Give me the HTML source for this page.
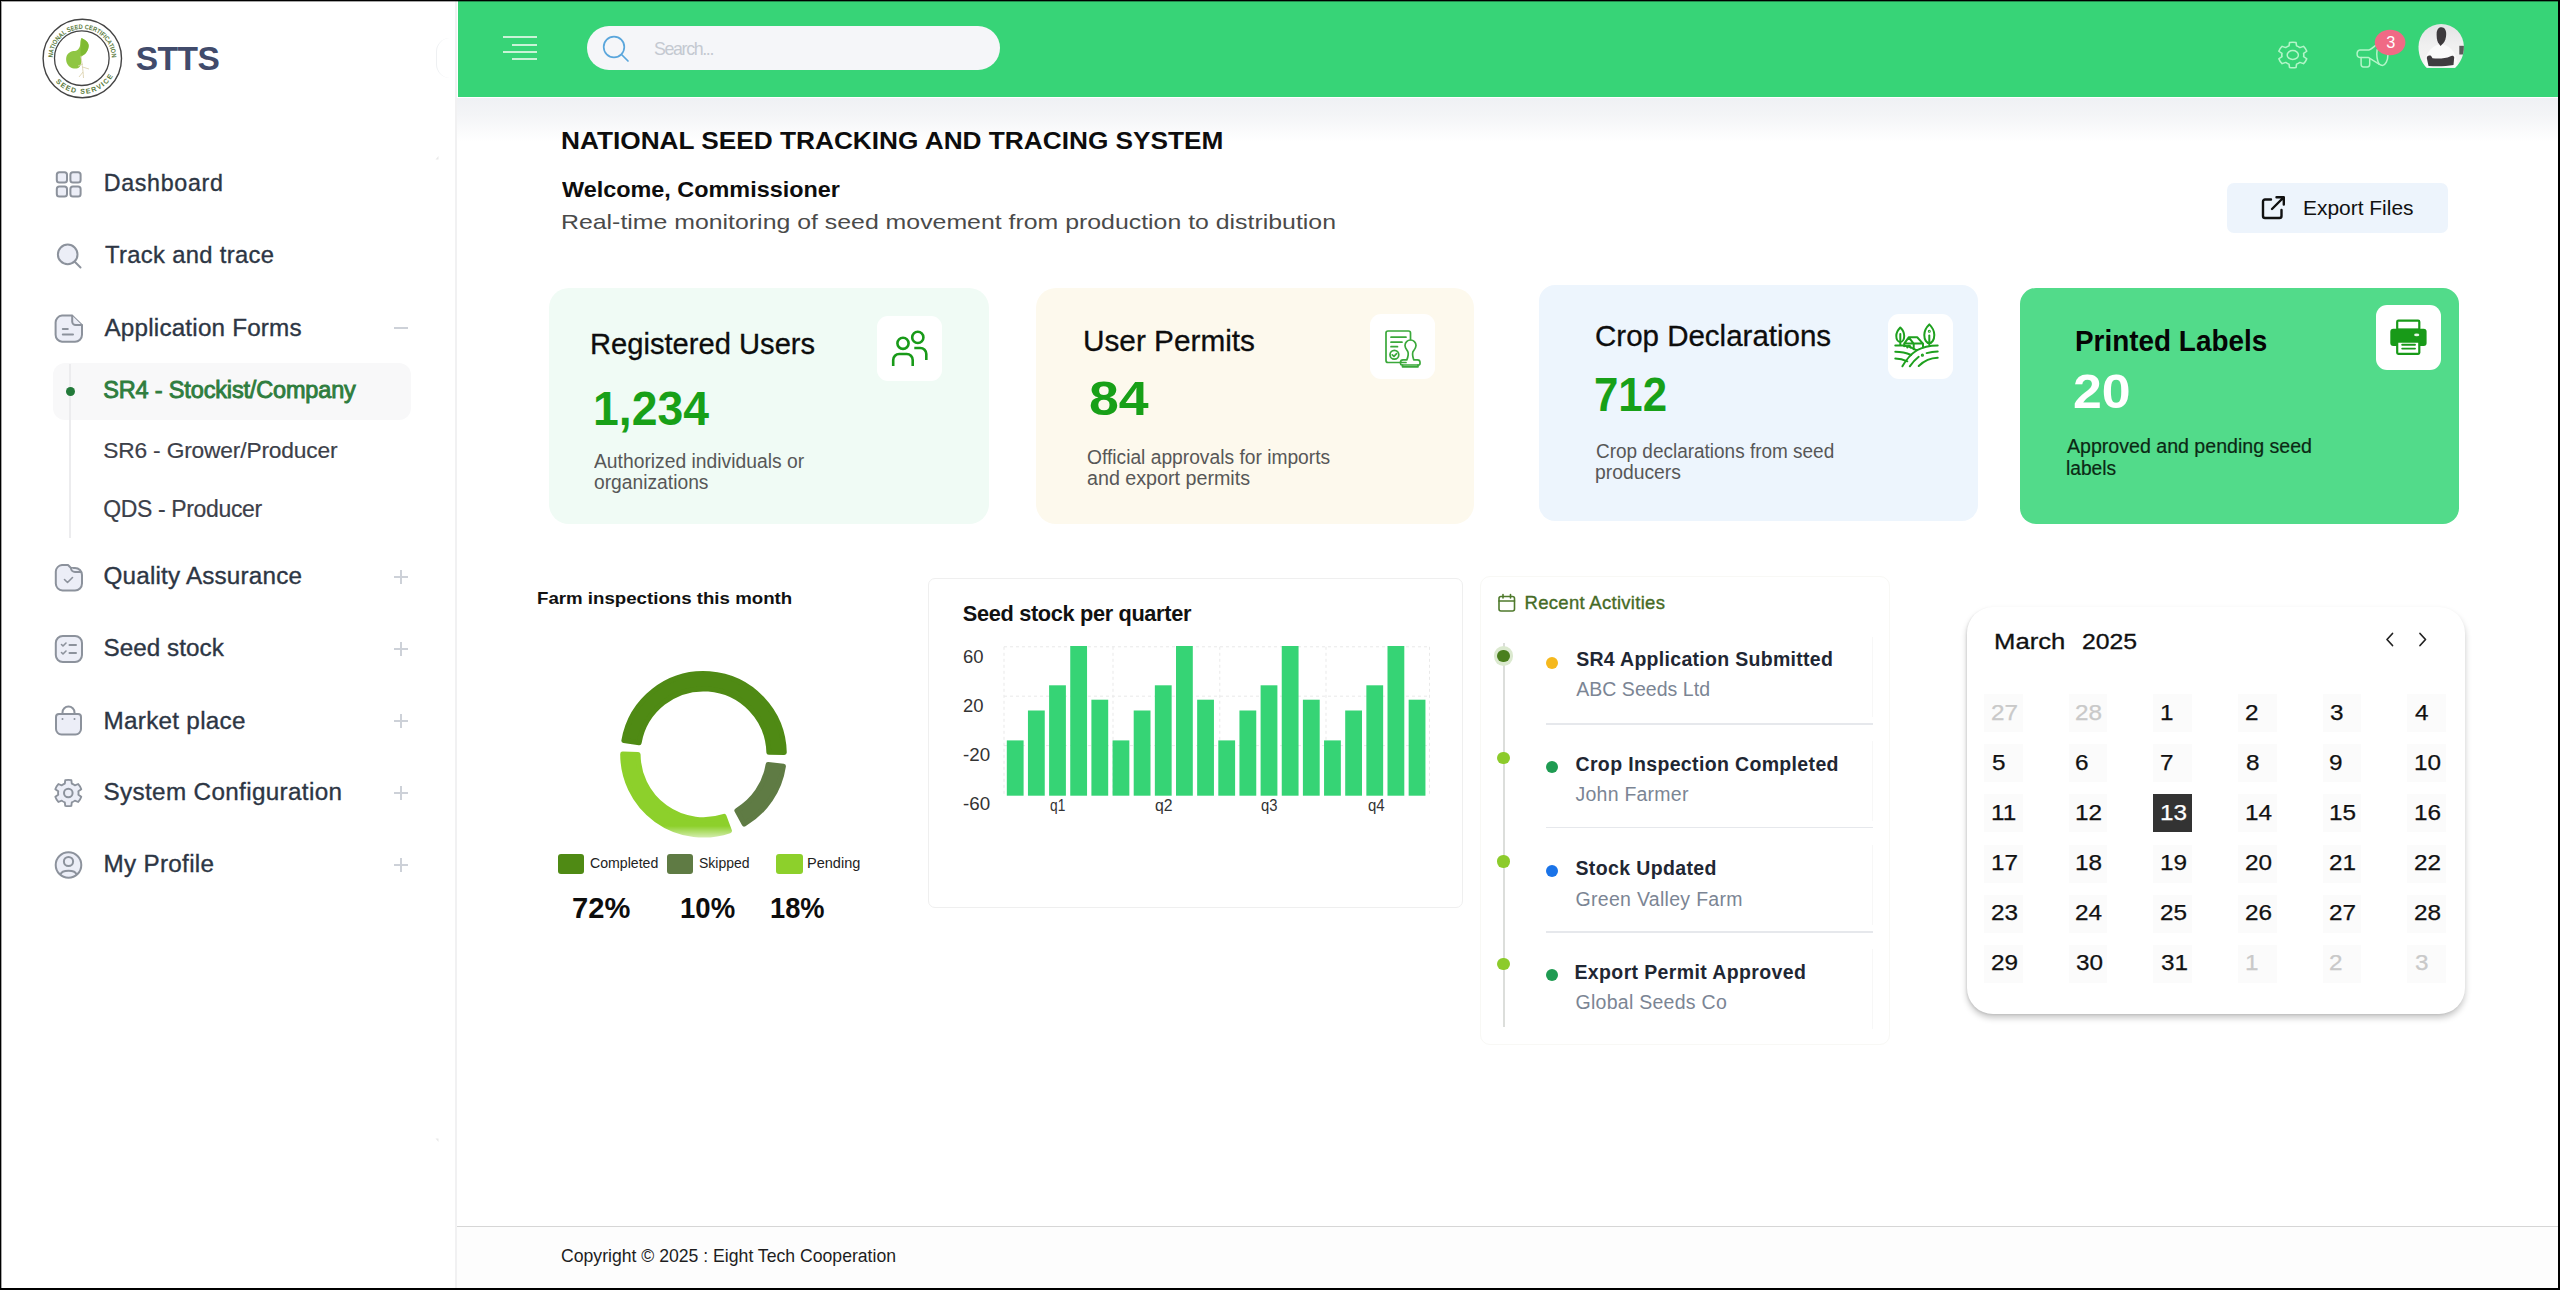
<!DOCTYPE html>
<html><head><meta charset="utf-8"><title>STTS Dashboard</title>
<style>
html,body{margin:0;padding:0;}
body{width:2560px;height:1290px;position:relative;overflow:hidden;background:#ffffff;font-family:"Liberation Sans",sans-serif;}
.t{position:absolute;white-space:nowrap;}
</style></head><body>
<div style="position:absolute;left:0;top:0;width:457px;height:1290px;background:#ffffff;"></div>
<div style="position:absolute;left:455px;top:0;width:2px;height:1290px;background:#f1f1f2;"></div>
<div style="position:absolute;left:458px;top:0;width:2102px;height:97px;background:#37d477;"></div>
<div style="position:absolute;left:457px;top:98px;width:2103px;height:44px;background:linear-gradient(#eff1f4,#f4f5f7 40%,#ffffff);"></div>
<div style="position:absolute;left:457px;top:1226px;width:2103px;height:64px;background:#fdfdfd;border-top:1px solid #d6d6d6;"></div>
<svg style="position:absolute;left:40px;top:16px" width="86" height="86" viewBox="0 0 86 86">
      <defs><path id="ringTop" d="M12.72 41.47 A29.6 29.6 0 0 1 71.88 41.47"/><path id="ringBot" d="M15.66 65.66 A35.3 35.3 0 0 0 72.87 60.15"/></defs>
      <circle cx="42.3" cy="42.5" r="39.2" fill="#ffffff" stroke="#444" stroke-width="1.4"/>
      <circle cx="41.8" cy="42.2" r="27.3" fill="#ffffff" stroke="#444" stroke-width="1.3"/>
      <text font-family="Liberation Sans" font-weight="700" font-size="6.6" fill="#5a7a3c"><textPath href="#ringTop" textLength="90.9" lengthAdjust="spacingAndGlyphs">NATIONAL SEED CERTIFICATION</textPath></text>
      <text font-family="Liberation Sans" font-weight="700" font-size="7" fill="#5a7a3c"><textPath href="#ringBot" textLength="67" lengthAdjust="spacing">SEED  SERVICE</textPath></text>
      <path d="M41.5 22 C45 23.5 49 26.5 48.7 30 C48.5 33 47 35.5 45.5 37.5 C43.5 39.5 41.5 40 40.8 41.5 C41.5 44 42 48 39.5 51 C37.5 53 33 53 30 51 C26.5 48.5 25.5 44 26.5 40.5 C27.5 37 31 35 35 35 C37.5 34.5 39 33 40 30 C40.5 27 40 24.5 41.5 22 Z" fill="#8fc643"/>
      <path d="M41.5 22 C45 23.5 49 26.5 48.7 30 C48.5 33 47 35.5 45.5 37.5 C44 39 42 39.5 41 39 C40 35 41 31 41.2 27 Z" fill="#7cb830" opacity="0.8"/>
      <path d="M41 40 C41.5 46 43 52 43.5 62 M42.5 51 L49 53 M43 56 L39 61 M43 48 L38 50" stroke="#ddd3b0" stroke-width="0.9" fill="none"/>
    </svg>
<svg style="position:absolute;left:50px;top:166px" width="36" height="36" viewBox="0 0 36 36">
      <rect x="6.8" y="6.2" width="10.2" height="10.2" rx="2.5" stroke="#8c929c" stroke-width="2" fill="#eceef7" stroke-linejoin="round" stroke-linecap="round"/>
      <rect x="20.4" y="6.2" width="10.2" height="10.2" rx="2.5" stroke="#8c929c" stroke-width="2" fill="#eceef7" stroke-linejoin="round" stroke-linecap="round"/>
      <rect x="6.8" y="20.4" width="10.2" height="10.2" rx="2.5" stroke="#8c929c" stroke-width="2" fill="#eceef7" stroke-linejoin="round" stroke-linecap="round"/>
      <rect x="20.4" y="20.4" width="10.2" height="10.2" rx="2.5" stroke="#8c929c" stroke-width="2" fill="#eceef7" stroke-linejoin="round" stroke-linecap="round"/></svg>
<svg style="position:absolute;left:50px;top:237px" width="36" height="36" viewBox="0 0 36 36">
      <circle cx="17.7" cy="17.4" r="9.8" stroke="#8c929c" stroke-width="2" fill="#eceef7" stroke-linejoin="round" stroke-linecap="round"/><path d="M25 25 L30.5 30.5" stroke="#8c929c" stroke-width="2" fill="#eceef7" stroke-linejoin="round" stroke-linecap="round"/></svg>
<svg style="position:absolute;left:50px;top:310px" width="36" height="36" viewBox="0 0 36 36">
      <path d="M12 5.6 H22.2 L32 15.2 V24.8 A7 7 0 0 1 25 31.8 H12 A7 7 0 0 1 5.6 24.8 V12.6 A7 7 0 0 1 12 5.6 Z" stroke="#8c929c" stroke-width="2" fill="#eceef7" stroke-linejoin="round" stroke-linecap="round"/>
      <path d="M22.2 5.8 V11.5 A3.5 3.5 0 0 0 25.7 15 H31.8" stroke="#8c929c" stroke-width="2" fill="#eceef7" stroke-linejoin="round" stroke-linecap="round"/>
      <path d="M12.8 18.9 H17.8 M12.8 24.5 H23" stroke="#8c929c" stroke-width="2" fill="#eceef7" stroke-linejoin="round" stroke-linecap="round"/></svg>
<svg style="position:absolute;left:50px;top:559px" width="36" height="36" viewBox="0 0 36 36">
      <path d="M12 6 H18 L21 9 H25 A7 7 0 0 1 32 16 V24.5 A7 7 0 0 1 25 31.5 H12.5 A7 7 0 0 1 5.8 24.5 V12.5 A7 7 0 0 1 12 6 Z" stroke="#8c929c" stroke-width="2" fill="#eceef7" stroke-linejoin="round" stroke-linecap="round"/>
      <path d="M21 9 A4 4 0 0 0 25 13 H31" stroke="#8c929c" stroke-width="2" fill="#eceef7" stroke-linejoin="round" stroke-linecap="round" fill="none"/>
      <path d="M14.5 20.5 L17.5 23.5 L22.5 18.5" stroke="#8c929c" stroke-width="1.6" fill="none" stroke-linecap="round" stroke-linejoin="round"/></svg>
<svg style="position:absolute;left:50px;top:631px" width="36" height="36" viewBox="0 0 36 36">
      <rect x="5.8" y="5" width="26.2" height="26" rx="7" stroke="#8c929c" stroke-width="2" fill="#eceef7" stroke-linejoin="round" stroke-linecap="round"/>
      <path d="M11.5 13.5 L13 15 L16 12 M11.5 21.5 L13 23 L16 20" stroke="#8c929c" stroke-width="1.6" fill="none" stroke-linecap="round" stroke-linejoin="round"/>
      <path d="M19.5 14 H26 M19.5 22 H26" stroke="#8c929c" stroke-width="2" stroke-linecap="round"/></svg>
<svg style="position:absolute;left:50px;top:703px" width="36" height="36" viewBox="0 0 36 36">
      <path d="M12.5 11 V9.5 A6 6 0 0 1 24.5 9.5 V11" stroke="#8c929c" stroke-width="2" fill="none"/>
      <path d="M9 11 H28 A3 3 0 0 1 31 14 L31 26 A5.5 5.5 0 0 1 25.5 31.5 H11.5 A5.5 5.5 0 0 1 6 26 L6 14 A3 3 0 0 1 9 11 Z" stroke="#8c929c" stroke-width="2" fill="#eceef7" stroke-linejoin="round" stroke-linecap="round"/>
      <circle cx="12.5" cy="16" r="1" fill="#8c929c"/><circle cx="24.5" cy="16" r="1" fill="#8c929c"/></svg>
<svg style="position:absolute;left:50px;top:775px" width="36" height="36" viewBox="0 0 36 36">
      <g transform="translate(18.3 18) scale(0.93 0.9)"><path d="M3.76 -10.34 L3.28 -14.23 A14.6 14.6 0 0 0 -3.28 -14.23 L-3.76 -10.34 A11.0 11.0 0 0 0 -7.07 -8.43 L-10.68 -9.96 A14.6 14.6 0 0 0 -13.96 -4.27 L-10.83 -1.91 A11.0 11.0 0 0 0 -10.83 1.91 L-13.96 4.27 A14.6 14.6 0 0 0 -10.68 9.96 L-7.07 8.43 A11.0 11.0 0 0 0 -3.76 10.34 L-3.28 14.23 A14.6 14.6 0 0 0 3.28 14.23 L3.76 10.34 A11.0 11.0 0 0 0 7.07 8.43 L10.68 9.96 A14.6 14.6 0 0 0 13.96 4.27 L10.83 1.91 A11.0 11.0 0 0 0 10.83 -1.91 L13.96 -4.27 A14.6 14.6 0 0 0 10.68 -9.96 L7.07 -8.43 A11.0 11.0 0 0 0 3.76 -10.34 Z" stroke="#8c929c" stroke-width="2" fill="#eceef7" stroke-linejoin="round" stroke-linecap="round"/></g>
      <circle cx="18.3" cy="18" r="4.3" stroke="#8c929c" stroke-width="2" fill="#eceef7" stroke-linejoin="round" stroke-linecap="round" fill="#ffffff"/></svg>
<svg style="position:absolute;left:50px;top:847px" width="36" height="36" viewBox="0 0 36 36">
      <circle cx="18.5" cy="18" r="12.8" stroke="#8c929c" stroke-width="2" fill="#eceef7" stroke-linejoin="round" stroke-linecap="round"/>
      <circle cx="18.5" cy="14.5" r="4.6" stroke="#8c929c" stroke-width="2" fill="#eceef7"/>
      <path d="M10.5 27.5 C12 22.5 25 22.5 26.5 27.5" stroke="#8c929c" stroke-width="2" fill="none"/></svg>
<div style="position:absolute;left:394px;top:327px;width:14px;height:1.6px;background:#cdd1d8;"></div>
<div style="position:absolute;left:394px;top:576.2px;width:14px;height:1.6px;background:#cdd1d8;"></div>
<div style="position:absolute;left:400.2px;top:570px;width:1.6px;height:14px;background:#cdd1d8;"></div>
<div style="position:absolute;left:394px;top:648.2px;width:14px;height:1.6px;background:#cdd1d8;"></div>
<div style="position:absolute;left:400.2px;top:642px;width:1.6px;height:14px;background:#cdd1d8;"></div>
<div style="position:absolute;left:394px;top:720.2px;width:14px;height:1.6px;background:#cdd1d8;"></div>
<div style="position:absolute;left:400.2px;top:714px;width:1.6px;height:14px;background:#cdd1d8;"></div>
<div style="position:absolute;left:394px;top:792.2px;width:14px;height:1.6px;background:#cdd1d8;"></div>
<div style="position:absolute;left:400.2px;top:786px;width:1.6px;height:14px;background:#cdd1d8;"></div>
<div style="position:absolute;left:394px;top:864.2px;width:14px;height:1.6px;background:#cdd1d8;"></div>
<div style="position:absolute;left:400.2px;top:858px;width:1.6px;height:14px;background:#cdd1d8;"></div>
<div style="position:absolute;left:53px;top:363px;width:358px;height:57px;background:#f8f8f9;border-radius:12px;"></div>
<div style="position:absolute;left:69px;top:364px;width:1.5px;height:174px;background:#ececee;"></div>
<div style="position:absolute;left:66px;top:387.3px;width:9px;height:9px;border-radius:50%;background:#237a3a;"></div>
<div style="position:absolute;left:436px;top:38px;width:14px;height:40px;border-left:1.5px solid #eef0f2;border-radius:14px 0 0 14px;"></div>
<svg style="position:absolute;left:432px;top:153px" width="10" height="10" viewBox="0 0 10 10"><path d="M6.5 3 L3.5 6.5 H6.5 Z" fill="#e9e9e9"/></svg>
<svg style="position:absolute;left:432px;top:1135px" width="10" height="10" viewBox="0 0 10 10"><path d="M6.5 7 L3.5 3.5 H6.5 Z" fill="#e9e9e9"/></svg>
<div style="position:absolute;left:503px;top:35.7px;width:34px;height:2px;background:#c9f3d7;"></div>
<div style="position:absolute;left:512px;top:43.5px;width:25px;height:2px;background:#c9f3d7;"></div>
<div style="position:absolute;left:503px;top:50.8px;width:34px;height:2px;background:#c9f3d7;"></div>
<div style="position:absolute;left:512px;top:57.9px;width:25px;height:2px;background:#c9f3d7;"></div>
<div style="position:absolute;left:587px;top:26px;width:413px;height:44px;border-radius:22px;background:#f5f6f9;"></div>
<svg style="position:absolute;left:596px;top:30px" width="40" height="40" viewBox="0 0 40 40">
      <circle cx="18" cy="17" r="10.3" fill="none" stroke="#5aa6dc" stroke-width="1.7"/>
      <path d="M25.5 24.5 L32 31" stroke="#5aa6dc" stroke-width="1.7" stroke-linecap="round"/></svg>
<svg style="position:absolute;left:2272px;top:36px" width="42" height="38" viewBox="0 0 42 38">
      <g transform="translate(20.8 19) scale(1 0.875)"><path d="M3.76 -10.34 L3.28 -14.23 A14.6 14.6 0 0 0 -3.28 -14.23 L-3.76 -10.34 A11.0 11.0 0 0 0 -7.07 -8.43 L-10.68 -9.96 A14.6 14.6 0 0 0 -13.96 -4.27 L-10.83 -1.91 A11.0 11.0 0 0 0 -10.83 1.91 L-13.96 4.27 A14.6 14.6 0 0 0 -10.68 9.96 L-7.07 8.43 A11.0 11.0 0 0 0 -3.76 10.34 L-3.28 14.23 A14.6 14.6 0 0 0 3.28 14.23 L3.76 10.34 A11.0 11.0 0 0 0 7.07 8.43 L10.68 9.96 A14.6 14.6 0 0 0 13.96 4.27 L10.83 1.91 A11.0 11.0 0 0 0 10.83 -1.91 L13.96 -4.27 A14.6 14.6 0 0 0 10.68 -9.96 L7.07 -8.43 A11.0 11.0 0 0 0 3.76 -10.34 Z" fill="none" stroke="#b3f5c8" stroke-width="1.6" stroke-linejoin="round"/></g>
      <ellipse cx="20.8" cy="19" rx="5.6" ry="4.5" fill="none" stroke="#b3f5c8" stroke-width="1.5"/></svg>
<svg style="position:absolute;left:2350px;top:25px" width="60" height="47" viewBox="0 0 60 47">
      <g fill="none" stroke="#b3f5c8" stroke-width="1.5" stroke-linejoin="round" stroke-linecap="round">
      <path d="M25.5 20.4 C23 22.5 20.5 25.1 17.5 25.1 L9.8 25.1 C8 25.1 7.1 27 7.1 28.8 C7.1 30.8 8.2 32.4 9.8 32.4 L18.2 32.4 L29.1 39.2 C30.5 40.2 31.5 40.4 32.5 40.4 C35.5 40.2 37.9 35.5 37.9 29.9"/>
      <path d="M11.1 32.6 V39.3 C11.1 40.9 12.1 41.9 13.5 41.9 H17.3 C18.7 41.9 19.7 40.9 19.7 39.3 V33.4"/>
      <path d="M27.1 24.8 C26.5 29 27 35 29.1 39.2"/></g>
      <ellipse cx="40.1" cy="17.5" rx="15.3" ry="12.75" fill="#f06a85"/></svg>
<svg style="position:absolute;left:2416px;top:22px" width="50" height="48" viewBox="0 0 50 48">
      <defs><clipPath id="av"><path d="M2.5 24.6 A22.7 22.7 0 0 1 47.9 24.6 C47.9 34 44.5 41 39 45.7 L10.8 45.7 C5.5 41 2.5 34 2.5 24.6 Z"/></clipPath>
      <linearGradient id="avg" x1="0" y1="0" x2="0" y2="1"><stop offset="0" stop-color="#e2e2e4"/><stop offset="0.5" stop-color="#f0f0f0"/><stop offset="1" stop-color="#f4f4f4"/></linearGradient></defs>
      <g clip-path="url(#av)">
        <rect x="0" y="0" width="50" height="48" fill="url(#avg)"/>
        <path d="M8 48 C8 36 12 24 25 22 C38 24 42 36 42 48 Z" fill="#fafafa"/>
        <rect x="43.3" y="23.8" width="5" height="8.7" fill="#5a5a5a"/>
        <path d="M20.6 12 C20.6 7 23 5.2 25.5 5.2 C28.5 5.2 30.2 8 30.2 12 C30.2 16 29 19 27.5 21 L24.5 24 L22 20.5 C21 18.5 20.6 15 20.6 12 Z" fill="#3d3a3d"/>
        <path d="M10.8 36 C11 33.5 13 33 15 33.8 L16.5 36.2 C22 37 30 36.5 34 34.5 C36 33.2 38 33.5 38.2 35.5 L37.5 43 C30 44.5 20 44.5 12.5 44 Z" fill="#3f3c40"/>
      </g></svg>
<div style="position:absolute;left:2227px;top:183px;width:221px;height:50px;border-radius:7px;background:#edf4fc;"></div>
<svg style="position:absolute;left:2258px;top:193px" width="30" height="30" viewBox="0 0 30 30">
      <path d="M13 6.5 H7 A2 2 0 0 0 5 8.5 V23 A2 2 0 0 0 7 25 H21.5 A2 2 0 0 0 23.5 23 V17" fill="none" stroke="#111" stroke-width="2.4" stroke-linecap="round"/>
      <path d="M14 16 L25.5 4.5 M18.5 4.3 H25.8 V11.5" fill="none" stroke="#111" stroke-width="2.4" stroke-linecap="round" stroke-linejoin="round"/></svg>
<div style="position:absolute;left:549px;top:288px;width:440px;height:236px;border-radius:20px;background:#f0fbf5;"></div>
<div style="position:absolute;left:1036px;top:288px;width:438px;height:236px;border-radius:20px;background:#fdf9ed;"></div>
<div style="position:absolute;left:1539px;top:285px;width:439px;height:236px;border-radius:16px;background:#edf5fd;"></div>
<div style="position:absolute;left:2020px;top:288px;width:439px;height:236px;border-radius:16px;background:#52db8a;"></div>
<div style="position:absolute;left:877px;top:316px;width:65px;height:65px;border-radius:11px;background:#ffffff;"></div>
<div style="position:absolute;left:1370px;top:314px;width:65px;height:65px;border-radius:11px;background:#ffffff;"></div>
<div style="position:absolute;left:1888px;top:313.5px;width:65px;height:65px;border-radius:11px;background:#ffffff;"></div>
<div style="position:absolute;left:2375.5px;top:304.7px;width:65px;height:65px;border-radius:11px;background:#ffffff;"></div>
<svg style="position:absolute;left:877px;top:316px" width="65" height="65" viewBox="0 0 65 65">
      <g fill="none" stroke="#189a18" stroke-width="2.6" stroke-linecap="butt">
      <circle cx="26" cy="27.3" r="5.6"/><circle cx="40.8" cy="21.4" r="5.6"/>
      <path d="M16.2 50 V44 A6 6 0 0 1 22.2 38 H29.7 A6 6 0 0 1 35.7 44 V50"/>
      <path d="M37.3 32 H43.3 A6 6 0 0 1 49.3 38 V44"/></g></svg>
<svg style="position:absolute;left:1370px;top:314px" width="65" height="65" viewBox="0 0 65 65">
      <g fill="none" stroke="#3aa83a" stroke-width="1.7" stroke-linejoin="round" stroke-linecap="round">
      <path d="M36 48.5 H18 A2 2 0 0 1 16 46.5 V19 A2 2 0 0 1 18 17 H38.5 A2 2 0 0 1 40.5 19 V25.5"/>
      <path d="M21 23.2 H36 M21 28.2 H32 M21 32.7 H27.5"/>
      <circle cx="24.4" cy="40.8" r="4.4"/><path d="M22.3 40.8 L24 42.4 L26.6 39.6"/>
      <path d="M36.8 45.8 H33 A2.5 2.5 0 0 0 30.5 48.3 V49.5 A1.5 1.5 0 0 0 32 51 H48.5 A1.5 1.5 0 0 0 50 49.5 V48.3 A2.5 2.5 0 0 0 47.5 45.8 H43.7 C42.8 43 42 40 43 37.5 C44.5 35.5 46 34 46 31.5 A5.5 5.5 0 0 0 35 31.5 C35 34 36.5 35.5 37.8 37.5 C38.8 40 38 43 36.8 45.8 Z"/>
      <path d="M32.5 51 V52.8 H48 V51"/></g></svg>
<svg style="position:absolute;left:1888px;top:313.5px" width="65" height="65" viewBox="0 0 65 65">
      <g fill="none" stroke="#1ea01e" stroke-width="2" stroke-linecap="round" stroke-linejoin="round">
      <path d="M12.3 13.5 C15 16 16.2 18.5 16.2 22 C16.2 25.5 14.5 28 12.3 28 C10 28 8.3 25.5 8.3 22 C8.3 18.5 9.8 16 12.3 13.5 Z"/>
      <path d="M12.3 20 V31"/>
      <path d="M41.3 10.4 C44.5 13.5 46.3 17 46.3 21 C46.3 25.8 44 29.1 41.3 29.1 C38.5 29.1 36.3 25.8 36.3 21 C36.3 17 38 13.5 41.3 10.4 Z"/>
      <path d="M41.3 21.5 V31"/><circle cx="41.3" cy="17.3" r="0.5"/>
      <path d="M7.3 31.4 H14.9 C19.5 31.6 24 33.5 28.6 36.3 C35 32.8 41 31.5 49.7 31.4"/>
      <path d="M16.2 29.6 L20.7 23.3 H29.2 L35 29.6 V33.3 M20.7 23.3 L25.7 29.6 V35.2 M16.2 29.6 H35 M16.2 29.6 V32.2"/>
      <path d="M19.3 33.4 A1.6 1.6 0 0 1 22.5 33.4"/>
      <path d="M7.3 37.8 C13 37.8 18.5 39 23 41"/>
      <path d="M7.3 44.4 C11.5 44.5 15.5 45.5 19.3 47.3"/>
      <path d="M14.4 52.3 C18 46 23 40 28.6 36.5"/>
      <path d="M21.8 52.3 C24.5 48.5 27.5 45.3 30.7 42.8"/>
      <path d="M38.6 39.1 C42 38.2 46 37.6 49.7 37.5"/>
      <path d="M30.7 52 C36 47 42 44 49.7 43.8"/>
      <circle cx="34.4" cy="41.2" r="0.6" fill="#1ea01e"/></g></svg>
<svg style="position:absolute;left:2375.5px;top:304.7px" width="65" height="65" viewBox="0 0 65 65">
      <rect x="21.2" y="15.6" width="22.1" height="9" rx="1.2" fill="none" stroke="#189a18" stroke-width="2.2"/>
      <rect x="14.3" y="23.8" width="36.3" height="17.1" rx="3" fill="#189a18"/>
      <rect x="21.2" y="36.6" width="22.1" height="12.2" rx="1" fill="#ffffff" stroke="#189a18" stroke-width="2.2"/>
      <path d="M26.2 39.8 H39 M26.2 43.6 H39" stroke="#189a18" stroke-width="1.9" stroke-linecap="round"/>
      <ellipse cx="40.7" cy="29.9" rx="2.6" ry="1.3" fill="#e7f7e7"/></svg>
<svg style="position:absolute;left:0;top:0" width="1000" height="900" viewBox="0 0 1000 900">
      <defs><linearGradient id="fade" x1="0" y1="0" x2="0" y2="1"><stop offset="0" stop-color="#fff" stop-opacity="0"/><stop offset="1" stop-color="#fff" stop-opacity="0.75"/></linearGradient></defs>
      <path d="M784.28 752.51 A80.8 80.8 0 0 0 623.87 740.58 L639.13 742.73 A65.4 65.4 0 0 1 768.87 752.37 Z" fill="#4f8a14" stroke="#4f8a14" stroke-width="5.0" stroke-linejoin="round"/>
      <path d="M744.23 824.08 A80.8 80.8 0 0 0 783.40 766.34 L768.10 764.52 A65.4 65.4 0 0 1 736.88 810.54 Z" fill="#5f7b44" stroke="#5f7b44" stroke-width="5.0" stroke-linejoin="round"/>
      <path d="M622.70 753.98 A80.8 80.8 0 0 0 729.44 830.82 L724.05 816.39 A65.4 65.4 0 0 1 638.10 754.52 Z" fill="#8dd02b" stroke="#8dd02b" stroke-width="5.0" stroke-linejoin="round"/>
      <rect x="640" y="826" width="100" height="14" fill="url(#fade)"/>
    </svg>
<div style="position:absolute;left:557.8px;top:854.4px;width:26.6px;height:19.4px;border-radius:3px;background:#4f8a14;"></div>
<div style="position:absolute;left:666.9px;top:854.4px;width:26.6px;height:19.4px;border-radius:3px;background:#5f7b44;"></div>
<div style="position:absolute;left:776px;top:854.4px;width:26.6px;height:19.4px;border-radius:3px;background:#8dd02b;"></div>
<div style="position:absolute;left:928px;top:578px;width:535px;height:330px;border:1.5px solid #efefef;border-radius:7px;box-sizing:border-box;background:#fff;"></div>
<svg style="position:absolute;left:0;top:0" width="1500" height="900" viewBox="0 0 1500 900">
<path d="M1004 646.8 H1430" stroke="#e9e9e9" stroke-width="1" stroke-dasharray="3 3"/>
<path d="M1004 696.2 H1430" stroke="#e9e9e9" stroke-width="1" stroke-dasharray="3 3"/>
<path d="M1004 745.6 H1430" stroke="#e9e9e9" stroke-width="1" stroke-dasharray="3 3"/>
<path d="M1004 646.8 V795.7" stroke="#e9e9e9" stroke-width="1" stroke-dasharray="3 3"/>
<path d="M1113 646.8 V795.7" stroke="#e9e9e9" stroke-width="1" stroke-dasharray="3 3"/>
<path d="M1219.8 646.8 V795.7" stroke="#e9e9e9" stroke-width="1" stroke-dasharray="3 3"/>
<path d="M1326 646.8 V795.7" stroke="#e9e9e9" stroke-width="1" stroke-dasharray="3 3"/>
<path d="M1429.5 646.8 V795.7" stroke="#e9e9e9" stroke-width="1" stroke-dasharray="3 3"/>
<rect x="1006.80" y="740.4" width="16.8" height="55.30" fill="#36d475"/>
<rect x="1027.95" y="710.5" width="16.8" height="85.20" fill="#36d475"/>
<rect x="1049.10" y="685.3" width="16.8" height="110.40" fill="#36d475"/>
<rect x="1070.25" y="646.0" width="16.8" height="149.70" fill="#36d475"/>
<rect x="1091.40" y="699.7" width="16.8" height="96.00" fill="#36d475"/>
<rect x="1112.55" y="740.4" width="16.8" height="55.30" fill="#36d475"/>
<rect x="1133.70" y="710.5" width="16.8" height="85.20" fill="#36d475"/>
<rect x="1154.85" y="685.3" width="16.8" height="110.40" fill="#36d475"/>
<rect x="1176.00" y="646.0" width="16.8" height="149.70" fill="#36d475"/>
<rect x="1197.15" y="699.7" width="16.8" height="96.00" fill="#36d475"/>
<rect x="1218.30" y="740.4" width="16.8" height="55.30" fill="#36d475"/>
<rect x="1239.45" y="710.5" width="16.8" height="85.20" fill="#36d475"/>
<rect x="1260.60" y="685.3" width="16.8" height="110.40" fill="#36d475"/>
<rect x="1281.75" y="646.0" width="16.8" height="149.70" fill="#36d475"/>
<rect x="1302.90" y="699.7" width="16.8" height="96.00" fill="#36d475"/>
<rect x="1324.05" y="740.4" width="16.8" height="55.30" fill="#36d475"/>
<rect x="1345.20" y="710.5" width="16.8" height="85.20" fill="#36d475"/>
<rect x="1366.35" y="685.3" width="16.8" height="110.40" fill="#36d475"/>
<rect x="1387.50" y="646.0" width="16.8" height="149.70" fill="#36d475"/>
<rect x="1408.65" y="699.7" width="16.8" height="96.00" fill="#36d475"/>
</svg>
<div style="position:absolute;left:1480px;top:576px;width:410px;height:469px;border:1px solid #f8f8f5;border-radius:10px;box-sizing:border-box;"></div>
<svg style="position:absolute;left:1496px;top:592px" width="22" height="22" viewBox="0 0 22 22">
      <rect x="3" y="4.5" width="15.5" height="14.5" rx="2" fill="none" stroke="#4f7a2c" stroke-width="1.6"/>
      <path d="M3 9 H18.5 M7 2.5 V6 M14.5 2.5 V6" stroke="#4f7a2c" stroke-width="1.6" stroke-linecap="round"/></svg>
<div style="position:absolute;left:1503.2px;top:643px;width:1.7px;height:384px;background:#dcdedb;"></div>
<div style="position:absolute;left:1493.6px;top:646.1px;width:19.8px;height:19.8px;border-radius:50%;background:#dbe9cf;"></div>
<div style="position:absolute;left:1497.1px;top:649.6px;width:12.8px;height:12.8px;border-radius:50%;background:#4a7f1d;"></div>
<div style="position:absolute;left:1497.3999999999999px;top:752.0999999999999px;width:12.4px;height:12.4px;border-radius:50%;background:#8ccb2b;"></div>
<div style="position:absolute;left:1497.3999999999999px;top:855.1999999999999px;width:12.4px;height:12.4px;border-radius:50%;background:#8ccb2b;"></div>
<div style="position:absolute;left:1497.3999999999999px;top:957.5px;width:12.4px;height:12.4px;border-radius:50%;background:#8ccb2b;"></div>
<div style="position:absolute;left:1545.8px;top:656.7px;width:12px;height:12px;border-radius:50%;background:#f5b81d;"></div>
<div style="position:absolute;left:1545.8px;top:760.5px;width:12px;height:12px;border-radius:50%;background:#1f9b52;"></div>
<div style="position:absolute;left:1545.8px;top:864.9px;width:12px;height:12px;border-radius:50%;background:#1a73e8;"></div>
<div style="position:absolute;left:1545.8px;top:969.4px;width:12px;height:12px;border-radius:50%;background:#1f9b52;"></div>
<div style="position:absolute;left:1545.7px;top:723.15px;width:327px;height:1.5px;background:#e6e8ec;"></div>
<div style="position:absolute;left:1545.7px;top:826.75px;width:327px;height:1.5px;background:#e6e8ec;"></div>
<div style="position:absolute;left:1545.7px;top:931.25px;width:327px;height:1.5px;background:#e6e8ec;"></div>
<div style="position:absolute;left:1872px;top:637px;width:1px;height:80px;background:#f7f7f7;"></div>
<div style="position:absolute;left:1872px;top:741px;width:1px;height:80px;background:#f7f7f7;"></div>
<div style="position:absolute;left:1872px;top:845px;width:1px;height:80px;background:#f7f7f7;"></div>
<div style="position:absolute;left:1872px;top:949px;width:1px;height:80px;background:#f7f7f7;"></div>
<div style="position:absolute;left:1967px;top:607px;width:498px;height:407px;border-radius:26px;background:#ffffff;box-shadow:0 4px 6px rgba(0,0,0,0.22), -1px 1px 2px rgba(0,0,0,0.07);"></div>
<svg style="position:absolute;left:2378px;top:628px" width="58" height="24" viewBox="0 0 58 24">
      <path d="M14.5 5.5 L9 11.5 L14.5 17.5" fill="none" stroke="#222" stroke-width="1.7" stroke-linecap="round" stroke-linejoin="round"/>
      <path d="M42 5.5 L47.5 11.5 L42 17.5" fill="none" stroke="#222" stroke-width="1.7" stroke-linecap="round" stroke-linejoin="round"/></svg>
<div style="position:absolute;left:1984.1px;top:694.2px;width:38.5px;height:38px;background:#fbfbfb;"></div>
<div style="position:absolute;left:2068.7px;top:694.2px;width:38.5px;height:38px;background:#fbfbfb;"></div>
<div style="position:absolute;left:2153.3px;top:694.2px;width:38.5px;height:38px;background:#fbfbfb;"></div>
<div style="position:absolute;left:2238.2px;top:694.2px;width:38.5px;height:38px;background:#fbfbfb;"></div>
<div style="position:absolute;left:2322.8px;top:694.2px;width:38.5px;height:38px;background:#fbfbfb;"></div>
<div style="position:absolute;left:2407.0px;top:694.2px;width:38.5px;height:38px;background:#fbfbfb;"></div>
<div style="position:absolute;left:1984.1px;top:744.3px;width:38.5px;height:38px;background:#fbfbfb;"></div>
<div style="position:absolute;left:2068.7px;top:744.3px;width:38.5px;height:38px;background:#fbfbfb;"></div>
<div style="position:absolute;left:2153.3px;top:744.3px;width:38.5px;height:38px;background:#fbfbfb;"></div>
<div style="position:absolute;left:2238.2px;top:744.3px;width:38.5px;height:38px;background:#fbfbfb;"></div>
<div style="position:absolute;left:2322.8px;top:744.3px;width:38.5px;height:38px;background:#fbfbfb;"></div>
<div style="position:absolute;left:2407.0px;top:744.3px;width:38.5px;height:38px;background:#fbfbfb;"></div>
<div style="position:absolute;left:1984.1px;top:794.4px;width:38.5px;height:38px;background:#fbfbfb;"></div>
<div style="position:absolute;left:2068.7px;top:794.4px;width:38.5px;height:38px;background:#fbfbfb;"></div>
<div style="position:absolute;left:2153.3px;top:794.4px;width:38.5px;height:38px;background:#333333;"></div>
<div style="position:absolute;left:2238.2px;top:794.4px;width:38.5px;height:38px;background:#fbfbfb;"></div>
<div style="position:absolute;left:2322.8px;top:794.4px;width:38.5px;height:38px;background:#fbfbfb;"></div>
<div style="position:absolute;left:2407.0px;top:794.4px;width:38.5px;height:38px;background:#fbfbfb;"></div>
<div style="position:absolute;left:1984.1px;top:844.5px;width:38.5px;height:38px;background:#fbfbfb;"></div>
<div style="position:absolute;left:2068.7px;top:844.5px;width:38.5px;height:38px;background:#fbfbfb;"></div>
<div style="position:absolute;left:2153.3px;top:844.5px;width:38.5px;height:38px;background:#fbfbfb;"></div>
<div style="position:absolute;left:2238.2px;top:844.5px;width:38.5px;height:38px;background:#fbfbfb;"></div>
<div style="position:absolute;left:2322.8px;top:844.5px;width:38.5px;height:38px;background:#fbfbfb;"></div>
<div style="position:absolute;left:2407.0px;top:844.5px;width:38.5px;height:38px;background:#fbfbfb;"></div>
<div style="position:absolute;left:1984.1px;top:894.6px;width:38.5px;height:38px;background:#fbfbfb;"></div>
<div style="position:absolute;left:2068.7px;top:894.6px;width:38.5px;height:38px;background:#fbfbfb;"></div>
<div style="position:absolute;left:2153.3px;top:894.6px;width:38.5px;height:38px;background:#fbfbfb;"></div>
<div style="position:absolute;left:2238.2px;top:894.6px;width:38.5px;height:38px;background:#fbfbfb;"></div>
<div style="position:absolute;left:2322.8px;top:894.6px;width:38.5px;height:38px;background:#fbfbfb;"></div>
<div style="position:absolute;left:2407.0px;top:894.6px;width:38.5px;height:38px;background:#fbfbfb;"></div>
<div style="position:absolute;left:1984.1px;top:944.7px;width:38.5px;height:38px;background:#fbfbfb;"></div>
<div style="position:absolute;left:2068.7px;top:944.7px;width:38.5px;height:38px;background:#fbfbfb;"></div>
<div style="position:absolute;left:2153.3px;top:944.7px;width:38.5px;height:38px;background:#fbfbfb;"></div>
<div style="position:absolute;left:2238.2px;top:944.7px;width:38.5px;height:38px;background:#fbfbfb;"></div>
<div style="position:absolute;left:2322.8px;top:944.7px;width:38.5px;height:38px;background:#fbfbfb;"></div>
<div style="position:absolute;left:2407.0px;top:944.7px;width:38.5px;height:38px;background:#fbfbfb;"></div>
<div style="position:absolute;left:0;top:0;width:2560px;height:1290px;box-sizing:border-box;border:2px solid #000;border-width:1px 2px 2px 1px;box-shadow:inset 1px 1px 0 rgba(0,0,0,0.35);"></div>
<div class="t" style="left:135.80px;top:41.54px;font-size:33.5px;line-height:33.5px;letter-spacing:-0.524px;font-weight:700;color:#414b6b;">STTS</div>
<div class="t" style="left:103.70px;top:171.52px;font-size:23.25px;line-height:23.25px;letter-spacing:0.686px;font-weight:400;color:#2d3644;-webkit-text-stroke:0.35px #2d3644;">Dashboard</div>
<div class="t" style="left:105.00px;top:243.20px;font-size:23.75px;line-height:23.75px;letter-spacing:0.342px;font-weight:400;color:#2d3644;-webkit-text-stroke:0.35px #2d3644;">Track and trace</div>
<div class="t" style="left:104.50px;top:315.97px;font-size:24.25px;line-height:24.25px;letter-spacing:0.191px;font-weight:400;color:#2d3644;-webkit-text-stroke:0.35px #2d3644;">Application Forms</div>
<div class="t" style="left:103.20px;top:379.41px;font-size:23.5px;line-height:23.5px;letter-spacing:-0.158px;font-weight:400;color:#2f7d3e;-webkit-text-stroke:0.9px #2f7d3e;">SR4 - Stockist/Company</div>
<div class="t" style="left:103.20px;top:438.74px;font-size:22.75px;line-height:22.75px;letter-spacing:-0.166px;font-weight:400;color:#3c4049;-webkit-text-stroke:0.2px #3c4049;">SR6 - Grower/Producer</div>
<div class="t" style="left:103.20px;top:497.63px;font-size:23.0px;line-height:23.0px;letter-spacing:-0.357px;font-weight:400;color:#3c4049;-webkit-text-stroke:0.2px #3c4049;">QDS - Producer</div>
<div class="t" style="left:103.50px;top:564.27px;font-size:24.25px;line-height:24.25px;letter-spacing:0.188px;font-weight:400;color:#2d3644;-webkit-text-stroke:0.35px #2d3644;">Quality Assurance</div>
<div class="t" style="left:103.50px;top:636.17px;font-size:24.25px;line-height:24.25px;letter-spacing:0.039px;font-weight:400;color:#2d3644;-webkit-text-stroke:0.35px #2d3644;">Seed stock</div>
<div class="t" style="left:103.50px;top:708.67px;font-size:24.25px;line-height:24.25px;letter-spacing:0.288px;font-weight:400;color:#2d3644;-webkit-text-stroke:0.35px #2d3644;">Market place</div>
<div class="t" style="left:103.50px;top:780.47px;font-size:24.25px;line-height:24.25px;letter-spacing:0.350px;font-weight:400;color:#2d3644;-webkit-text-stroke:0.35px #2d3644;">System Configuration</div>
<div class="t" style="left:103.50px;top:852.47px;font-size:24.25px;line-height:24.25px;letter-spacing:0.299px;font-weight:400;color:#2d3644;-webkit-text-stroke:0.35px #2d3644;">My Profile</div>
<div class="t" style="left:2386.30px;top:33.94px;font-size:16.25px;line-height:16.25px;letter-spacing:0.000px;font-weight:400;color:#ffffff;">3</div>
<div class="t" style="left:654.00px;top:40.57px;font-size:17.75px;line-height:17.75px;letter-spacing:-1.338px;font-weight:400;color:#c4c9d1;">Search...</div>
<div class="t" style="left:560.88px;top:129.91px;font-size:23.5px;line-height:23.5px;transform:scaleX(1.1159);transform-origin:0 0;font-weight:700;color:#0d0d0d;">NATIONAL SEED TRACKING AND TRACING SYSTEM</div>
<div class="t" style="left:562.00px;top:178.79px;font-size:21.75px;line-height:21.75px;transform:scaleX(1.0761);transform-origin:0 0;font-weight:700;color:#0d0d0d;">Welcome, Commissioner</div>
<div class="t" style="left:560.82px;top:210.92px;font-size:21.0px;line-height:21.0px;transform:scaleX(1.1835);transform-origin:0 0;font-weight:400;color:#4a4a4a;">Real-time monitoring of seed movement from production to distribution</div>
<div class="t" style="left:2303.49px;top:198.14px;font-size:20.75px;line-height:20.75px;transform:scaleX(1.0086);transform-origin:0 0;font-weight:400;color:#111111;">Export Files</div>
<div class="t" style="left:590.32px;top:328.63px;font-size:29.5px;line-height:29.5px;transform:scaleX(0.9878);transform-origin:0 0;font-weight:400;color:#0d0d0d;-webkit-text-stroke:0.3px #0d0d0d;">Registered Users</div>
<div class="t" style="left:593.09px;top:384.88px;font-size:47.75px;line-height:47.75px;transform:scaleX(0.9706);transform-origin:0 0;font-weight:700;color:#18a018;">1,234</div>
<div class="t" style="left:593.90px;top:452.39px;font-size:19.5px;line-height:19.5px;transform:scaleX(0.9889);transform-origin:0 0;font-weight:400;color:#575757;">Authorized individuals or</div>
<div class="t" style="left:593.90px;top:473.29px;font-size:19.5px;line-height:19.5px;transform:scaleX(0.9867);transform-origin:0 0;font-weight:400;color:#575757;">organizations</div>
<div class="t" style="left:1082.98px;top:325.73px;font-size:29.5px;line-height:29.5px;transform:scaleX(1.0089);transform-origin:0 0;font-weight:400;color:#0d0d0d;-webkit-text-stroke:0.3px #0d0d0d;">User Permits</div>
<div class="t" style="left:1088.78px;top:375.18px;font-size:47.75px;line-height:47.75px;transform:scaleX(1.1245);transform-origin:0 0;font-weight:700;color:#18a018;">84</div>
<div class="t" style="left:1087.40px;top:447.59px;font-size:19.5px;line-height:19.5px;transform:scaleX(0.9855);transform-origin:0 0;font-weight:400;color:#575757;">Official approvals for imports</div>
<div class="t" style="left:1087.40px;top:468.89px;font-size:19.5px;line-height:19.5px;transform:scaleX(1.0096);transform-origin:0 0;font-weight:400;color:#575757;">and export permits</div>
<div class="t" style="left:1595.18px;top:321.65px;font-size:29.0px;line-height:29.0px;transform:scaleX(1.0173);transform-origin:0 0;font-weight:400;color:#0d0d0d;-webkit-text-stroke:0.3px #0d0d0d;">Crop Declarations</div>
<div class="t" style="left:1594.19px;top:370.34px;font-size:48.5px;line-height:48.5px;transform:scaleX(0.9032);transform-origin:0 0;font-weight:700;color:#18a018;">712</div>
<div class="t" style="left:1596.00px;top:442.29px;font-size:19.5px;line-height:19.5px;transform:scaleX(0.9725);transform-origin:0 0;font-weight:400;color:#575757;">Crop declarations from seed</div>
<div class="t" style="left:1595.01px;top:463.09px;font-size:19.5px;line-height:19.5px;transform:scaleX(0.9911);transform-origin:0 0;font-weight:400;color:#575757;">producers</div>
<div class="t" style="left:2075.26px;top:325.52px;font-size:29.75px;line-height:29.75px;transform:scaleX(0.9378);transform-origin:0 0;font-weight:700;color:#050505;">Printed Labels</div>
<div class="t" style="left:2072.51px;top:368.19px;font-size:47.5px;line-height:47.5px;transform:scaleX(1.0909);transform-origin:0 0;font-weight:700;color:#ffffff;">20</div>
<div class="t" style="left:2067.30px;top:437.39px;font-size:19.5px;line-height:19.5px;transform:scaleX(1.0041);transform-origin:0 0;font-weight:400;color:#0b2914;-webkit-text-stroke:0.2px #0b2914;">Approved and pending seed</div>
<div class="t" style="left:2066.32px;top:458.69px;font-size:19.5px;line-height:19.5px;transform:scaleX(0.9841);transform-origin:0 0;font-weight:400;color:#0b2914;-webkit-text-stroke:0.2px #0b2914;">labels</div>
<div class="t" style="left:537.32px;top:590.00px;font-size:17.25px;line-height:17.25px;transform:scaleX(1.0822);transform-origin:0 0;font-weight:700;color:#111111;">Farm inspections this month</div>
<div class="t" style="left:589.80px;top:856.04px;font-size:14.25px;line-height:14.25px;transform:scaleX(0.9914);transform-origin:0 0;font-weight:400;color:#222222;">Completed</div>
<div class="t" style="left:698.50px;top:856.04px;font-size:14.25px;line-height:14.25px;transform:scaleX(0.9808);transform-origin:0 0;font-weight:400;color:#222222;">Skipped</div>
<div class="t" style="left:806.98px;top:856.04px;font-size:14.25px;line-height:14.25px;transform:scaleX(1.0204);transform-origin:0 0;font-weight:400;color:#222222;">Pending</div>
<div class="t" style="left:571.50px;top:894.15px;font-size:29.0px;line-height:29.0px;transform:scaleX(1.0042);transform-origin:0 0;font-weight:700;color:#0d0d0d;">72%</div>
<div class="t" style="left:679.65px;top:894.15px;font-size:29.0px;line-height:29.0px;transform:scaleX(0.9501);transform-origin:0 0;font-weight:700;color:#0d0d0d;">10%</div>
<div class="t" style="left:770.26px;top:894.15px;font-size:29.0px;line-height:29.0px;transform:scaleX(0.9396);transform-origin:0 0;font-weight:700;color:#0d0d0d;">18%</div>
<div class="t" style="left:962.80px;top:603.19px;font-size:21.75px;line-height:21.75px;letter-spacing:-0.340px;font-weight:700;color:#111111;">Seed stock per quarter</div>
<div class="t" style="left:962.80px;top:647.96px;font-size:18.0px;line-height:18.0px;transform:scaleX(1.0244);transform-origin:0 0;font-weight:400;color:#333333;">60</div>
<div class="t" style="left:962.80px;top:696.56px;font-size:18.0px;line-height:18.0px;transform:scaleX(1.0244);transform-origin:0 0;font-weight:400;color:#333333;">20</div>
<div class="t" style="left:962.90px;top:746.06px;font-size:18.0px;line-height:18.0px;transform:scaleX(1.0421);transform-origin:0 0;font-weight:400;color:#333333;">-20</div>
<div class="t" style="left:962.90px;top:794.86px;font-size:18.0px;line-height:18.0px;transform:scaleX(1.0421);transform-origin:0 0;font-weight:400;color:#333333;">-60</div>
<div class="t" style="left:1049.70px;top:798.17px;font-size:15.75px;line-height:15.75px;transform:scaleX(0.8712);transform-origin:0 0;font-weight:400;color:#333333;">q1</div>
<div class="t" style="left:1155.00px;top:798.17px;font-size:15.75px;line-height:15.75px;transform:scaleX(1.0024);transform-origin:0 0;font-weight:400;color:#333333;">q2</div>
<div class="t" style="left:1261.30px;top:798.17px;font-size:15.75px;line-height:15.75px;transform:scaleX(0.9403);transform-origin:0 0;font-weight:400;color:#333333;">q3</div>
<div class="t" style="left:1367.60px;top:798.17px;font-size:15.75px;line-height:15.75px;transform:scaleX(0.9516);transform-origin:0 0;font-weight:400;color:#333333;">q4</div>
<div class="t" style="left:1524.60px;top:594.44px;font-size:18.5px;line-height:18.5px;letter-spacing:0.288px;font-weight:400;color:#466b26;-webkit-text-stroke:0.35px #466b26;">Recent Activities</div>
<div class="t" style="left:1576.20px;top:649.99px;font-size:19.5px;line-height:19.5px;letter-spacing:0.298px;font-weight:700;color:#1f2733;">SR4 Application Submitted</div>
<div class="t" style="left:1576.20px;top:680.19px;font-size:19.5px;line-height:19.5px;letter-spacing:0.043px;font-weight:400;color:#7b8594;">ABC Seeds Ltd</div>
<div class="t" style="left:1575.50px;top:755.39px;font-size:19.5px;line-height:19.5px;letter-spacing:0.351px;font-weight:700;color:#1f2733;">Crop Inspection Completed</div>
<div class="t" style="left:1575.50px;top:785.19px;font-size:19.5px;line-height:19.5px;letter-spacing:0.236px;font-weight:400;color:#7b8594;">John Farmer</div>
<div class="t" style="left:1575.50px;top:859.29px;font-size:19.5px;line-height:19.5px;letter-spacing:0.366px;font-weight:700;color:#1f2733;">Stock Updated</div>
<div class="t" style="left:1575.50px;top:889.69px;font-size:19.5px;line-height:19.5px;letter-spacing:0.303px;font-weight:400;color:#7b8594;">Green Valley Farm</div>
<div class="t" style="left:1574.50px;top:962.89px;font-size:19.5px;line-height:19.5px;letter-spacing:0.368px;font-weight:700;color:#1f2733;">Export Permit Approved</div>
<div class="t" style="left:1575.50px;top:992.79px;font-size:19.5px;line-height:19.5px;letter-spacing:0.273px;font-weight:400;color:#7b8594;">Global Seeds Co</div>
<div class="t" style="left:1993.59px;top:632.21px;font-size:21.25px;line-height:21.25px;transform:scaleX(1.2076);transform-origin:0 0;font-weight:400;color:#111111;-webkit-text-stroke:0.3px #111;">March</div>
<div class="t" style="left:2082.23px;top:632.21px;font-size:21.25px;line-height:21.25px;transform:scaleX(1.1660);transform-origin:0 0;font-weight:400;color:#111111;-webkit-text-stroke:0.3px #111;">2025</div>
<div class="t" style="left:560.80px;top:1246.40px;font-size:19.25px;line-height:19.25px;transform:scaleX(0.9156);transform-origin:0 0;font-weight:400;color:#1e1e1e;">Copyright © 2025 : Eight Tech Cooperation</div>
<div class="t" style="left:1990.60px;top:701.95px;font-size:22.5px;line-height:22.5px;letter-spacing:0.000px;font-weight:400;color:#c9c9c9;transform:scaleX(1.08);transform-origin:0 0;-webkit-text-stroke:0.25px #c9c9c9;">27</div>
<div class="t" style="left:2075.20px;top:701.95px;font-size:22.5px;line-height:22.5px;letter-spacing:0.000px;font-weight:400;color:#c9c9c9;transform:scaleX(1.08);transform-origin:0 0;-webkit-text-stroke:0.25px #c9c9c9;">28</div>
<div class="t" style="left:2159.80px;top:701.95px;font-size:22.5px;line-height:22.5px;letter-spacing:0.000px;font-weight:400;color:#111111;transform:scaleX(1.08);transform-origin:0 0;-webkit-text-stroke:0.25px #111111;">1</div>
<div class="t" style="left:2244.70px;top:701.95px;font-size:22.5px;line-height:22.5px;letter-spacing:0.000px;font-weight:400;color:#111111;transform:scaleX(1.08);transform-origin:0 0;-webkit-text-stroke:0.25px #111111;">2</div>
<div class="t" style="left:2330.30px;top:701.95px;font-size:22.5px;line-height:22.5px;letter-spacing:0.000px;font-weight:400;color:#111111;transform:scaleX(1.08);transform-origin:0 0;-webkit-text-stroke:0.25px #111111;">3</div>
<div class="t" style="left:2414.50px;top:701.95px;font-size:22.5px;line-height:22.5px;letter-spacing:0.000px;font-weight:400;color:#111111;transform:scaleX(1.08);transform-origin:0 0;-webkit-text-stroke:0.25px #111111;">4</div>
<div class="t" style="left:1991.60px;top:751.95px;font-size:22.5px;line-height:22.5px;letter-spacing:0.000px;font-weight:400;color:#111111;transform:scaleX(1.08);transform-origin:0 0;-webkit-text-stroke:0.25px #111111;">5</div>
<div class="t" style="left:2075.20px;top:751.95px;font-size:22.5px;line-height:22.5px;letter-spacing:0.000px;font-weight:400;color:#111111;transform:scaleX(1.08);transform-origin:0 0;-webkit-text-stroke:0.25px #111111;">6</div>
<div class="t" style="left:2159.80px;top:751.95px;font-size:22.5px;line-height:22.5px;letter-spacing:0.000px;font-weight:400;color:#111111;transform:scaleX(1.08);transform-origin:0 0;-webkit-text-stroke:0.25px #111111;">7</div>
<div class="t" style="left:2245.70px;top:751.95px;font-size:22.5px;line-height:22.5px;letter-spacing:0.000px;font-weight:400;color:#111111;transform:scaleX(1.08);transform-origin:0 0;-webkit-text-stroke:0.25px #111111;">8</div>
<div class="t" style="left:2329.30px;top:751.95px;font-size:22.5px;line-height:22.5px;letter-spacing:0.000px;font-weight:400;color:#111111;transform:scaleX(1.08);transform-origin:0 0;-webkit-text-stroke:0.25px #111111;">9</div>
<div class="t" style="left:2413.50px;top:751.95px;font-size:22.5px;line-height:22.5px;letter-spacing:0.000px;font-weight:400;color:#111111;transform:scaleX(1.08);transform-origin:0 0;-webkit-text-stroke:0.25px #111111;">10</div>
<div class="t" style="left:1990.60px;top:801.95px;font-size:22.5px;line-height:22.5px;letter-spacing:0.000px;font-weight:400;color:#111111;transform:scaleX(1.08);transform-origin:0 0;-webkit-text-stroke:0.25px #111111;">11</div>
<div class="t" style="left:2075.20px;top:801.95px;font-size:22.5px;line-height:22.5px;letter-spacing:0.000px;font-weight:400;color:#111111;transform:scaleX(1.08);transform-origin:0 0;-webkit-text-stroke:0.25px #111111;">12</div>
<div class="t" style="left:2159.80px;top:801.95px;font-size:22.5px;line-height:22.5px;letter-spacing:0.000px;font-weight:400;color:#ffffff;transform:scaleX(1.08);transform-origin:0 0;-webkit-text-stroke:0.25px #ffffff;">13</div>
<div class="t" style="left:2244.70px;top:801.95px;font-size:22.5px;line-height:22.5px;letter-spacing:0.000px;font-weight:400;color:#111111;transform:scaleX(1.08);transform-origin:0 0;-webkit-text-stroke:0.25px #111111;">14</div>
<div class="t" style="left:2329.30px;top:801.95px;font-size:22.5px;line-height:22.5px;letter-spacing:0.000px;font-weight:400;color:#111111;transform:scaleX(1.08);transform-origin:0 0;-webkit-text-stroke:0.25px #111111;">15</div>
<div class="t" style="left:2413.50px;top:801.95px;font-size:22.5px;line-height:22.5px;letter-spacing:0.000px;font-weight:400;color:#111111;transform:scaleX(1.08);transform-origin:0 0;-webkit-text-stroke:0.25px #111111;">16</div>
<div class="t" style="left:1990.60px;top:851.95px;font-size:22.5px;line-height:22.5px;letter-spacing:0.000px;font-weight:400;color:#111111;transform:scaleX(1.08);transform-origin:0 0;-webkit-text-stroke:0.25px #111111;">17</div>
<div class="t" style="left:2075.20px;top:851.95px;font-size:22.5px;line-height:22.5px;letter-spacing:0.000px;font-weight:400;color:#111111;transform:scaleX(1.08);transform-origin:0 0;-webkit-text-stroke:0.25px #111111;">18</div>
<div class="t" style="left:2159.80px;top:851.95px;font-size:22.5px;line-height:22.5px;letter-spacing:0.000px;font-weight:400;color:#111111;transform:scaleX(1.08);transform-origin:0 0;-webkit-text-stroke:0.25px #111111;">19</div>
<div class="t" style="left:2244.70px;top:851.95px;font-size:22.5px;line-height:22.5px;letter-spacing:0.000px;font-weight:400;color:#111111;transform:scaleX(1.08);transform-origin:0 0;-webkit-text-stroke:0.25px #111111;">20</div>
<div class="t" style="left:2329.30px;top:851.95px;font-size:22.5px;line-height:22.5px;letter-spacing:0.000px;font-weight:400;color:#111111;transform:scaleX(1.08);transform-origin:0 0;-webkit-text-stroke:0.25px #111111;">21</div>
<div class="t" style="left:2413.50px;top:851.95px;font-size:22.5px;line-height:22.5px;letter-spacing:0.000px;font-weight:400;color:#111111;transform:scaleX(1.08);transform-origin:0 0;-webkit-text-stroke:0.25px #111111;">22</div>
<div class="t" style="left:1990.60px;top:901.95px;font-size:22.5px;line-height:22.5px;letter-spacing:0.000px;font-weight:400;color:#111111;transform:scaleX(1.08);transform-origin:0 0;-webkit-text-stroke:0.25px #111111;">23</div>
<div class="t" style="left:2075.20px;top:901.95px;font-size:22.5px;line-height:22.5px;letter-spacing:0.000px;font-weight:400;color:#111111;transform:scaleX(1.08);transform-origin:0 0;-webkit-text-stroke:0.25px #111111;">24</div>
<div class="t" style="left:2159.80px;top:901.95px;font-size:22.5px;line-height:22.5px;letter-spacing:0.000px;font-weight:400;color:#111111;transform:scaleX(1.08);transform-origin:0 0;-webkit-text-stroke:0.25px #111111;">25</div>
<div class="t" style="left:2244.70px;top:901.95px;font-size:22.5px;line-height:22.5px;letter-spacing:0.000px;font-weight:400;color:#111111;transform:scaleX(1.08);transform-origin:0 0;-webkit-text-stroke:0.25px #111111;">26</div>
<div class="t" style="left:2329.30px;top:901.95px;font-size:22.5px;line-height:22.5px;letter-spacing:0.000px;font-weight:400;color:#111111;transform:scaleX(1.08);transform-origin:0 0;-webkit-text-stroke:0.25px #111111;">27</div>
<div class="t" style="left:2413.50px;top:901.95px;font-size:22.5px;line-height:22.5px;letter-spacing:0.000px;font-weight:400;color:#111111;transform:scaleX(1.08);transform-origin:0 0;-webkit-text-stroke:0.25px #111111;">28</div>
<div class="t" style="left:1990.60px;top:951.95px;font-size:22.5px;line-height:22.5px;letter-spacing:0.000px;font-weight:400;color:#111111;transform:scaleX(1.08);transform-origin:0 0;-webkit-text-stroke:0.25px #111111;">29</div>
<div class="t" style="left:2076.20px;top:951.95px;font-size:22.5px;line-height:22.5px;letter-spacing:0.000px;font-weight:400;color:#111111;transform:scaleX(1.08);transform-origin:0 0;-webkit-text-stroke:0.25px #111111;">30</div>
<div class="t" style="left:2160.80px;top:951.95px;font-size:22.5px;line-height:22.5px;letter-spacing:0.000px;font-weight:400;color:#111111;transform:scaleX(1.08);transform-origin:0 0;-webkit-text-stroke:0.25px #111111;">31</div>
<div class="t" style="left:2244.70px;top:951.95px;font-size:22.5px;line-height:22.5px;letter-spacing:0.000px;font-weight:400;color:#c9c9c9;transform:scaleX(1.08);transform-origin:0 0;-webkit-text-stroke:0.25px #c9c9c9;">1</div>
<div class="t" style="left:2329.30px;top:951.95px;font-size:22.5px;line-height:22.5px;letter-spacing:0.000px;font-weight:400;color:#c9c9c9;transform:scaleX(1.08);transform-origin:0 0;-webkit-text-stroke:0.25px #c9c9c9;">2</div>
<div class="t" style="left:2414.50px;top:951.95px;font-size:22.5px;line-height:22.5px;letter-spacing:0.000px;font-weight:400;color:#c9c9c9;transform:scaleX(1.08);transform-origin:0 0;-webkit-text-stroke:0.25px #c9c9c9;">3</div>
</body></html>
